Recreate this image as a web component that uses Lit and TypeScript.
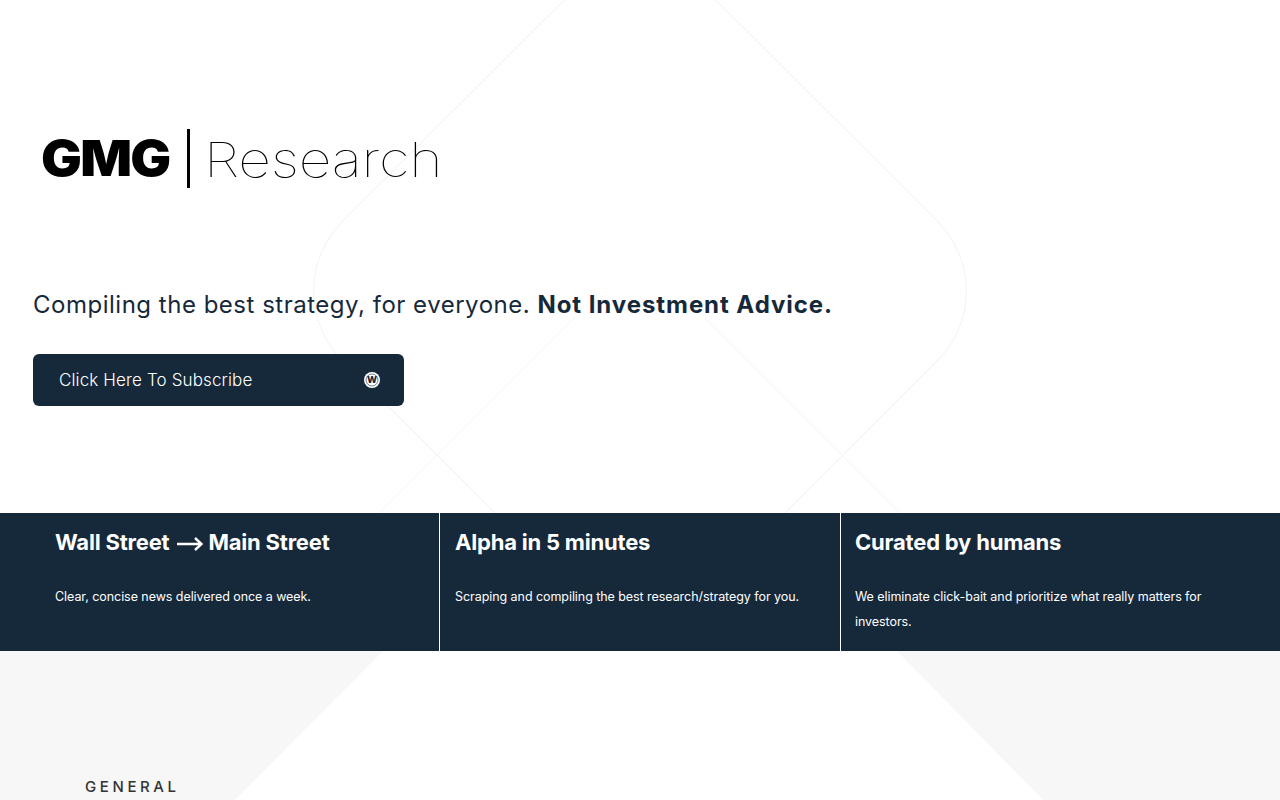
import { LitElement, html, css, svg } from "lit";
import { customElement } from "lit/decorators.js";

const arrow = html`<svg class="arrow" width="26" height="14" viewBox="0 0 26 14" fill="none" stroke="#fff" stroke-width="2.4"><path d="M0 7H24.5M18 1L24.5 7L18 13"></path></svg>`;

const features = [
  { t: html`Wall Street ${arrow} Main Street`, d: "Clear, concise news delivered once a week." },
  { t: html`Alpha in 5 minutes`, d: "Scraping and compiling the best research/strategy for you." },
  { t: html`Curated by humans`, d: "We eliminate click-bait and prioritize what really matters for investors." },
];

@customElement("app-root")
export class AppRoot extends LitElement {
  static styles = css`
    :host { display: block; font-family: Inter, "Liberation Sans", sans-serif; color: #16293b; }
    .page { position: relative; height: 800px; overflow: hidden; background: #fff; }
    .hero { position: relative; height: 513px; box-sizing: border-box; padding: 129px 0 0 33px; }
    .lines { position: absolute; left: 0; top: 0; pointer-events: none; }
    .content { position: relative; }
    .logo { display: flex; align-items: center; height: 59px; padding-left: 8px; color: #000; }
    .gmg { font-weight: 900; font-size: 50px; line-height: 59px; letter-spacing: -1.6px; width: 130px; white-space: nowrap; transform: scaleX(1.085); transform-origin: left center; }
    .bar { width: 3px; height: 59px; background: #000; margin: 0 15px 0 16px; }
    .research { font-weight: 100; font-size: 48px; line-height: 59px; white-space: nowrap; letter-spacing: -0.2px; margin-left: -1px; transform: scaleX(1.19) translateY(1px); transform-origin: left center; }
    .tagline { margin: 102px 0 0; font-size: 24px; line-height: 30px; font-weight: 400; letter-spacing: 0.51px; white-space: nowrap; }
    .tagline b { font-weight: 700; letter-spacing: 0.94px; }
    .btn { margin-top: 34px; width: 371px; height: 52px; box-sizing: border-box; padding: 0 24px 0 26px; background: #16293b; color: #fff; border-radius: 6px; display: flex; align-items: center; justify-content: space-between; font-size: 17px; font-weight: 300; letter-spacing: 0.13px; }
    .btn svg { display: block; }
    .band { position: relative; display: grid; grid-template-columns: 440px 401px 439px; height: 138px; background: #16293b; color: #fff; }
    .col { box-sizing: border-box; padding: 14px 30px 0 15px; border-right: 1px solid #fff; }
    .col:first-child { padding-left: 55px; }
    .col:last-child { border-right: 0; padding-right: 40px; padding-left: 14px; }
    .col h3 { margin: 0; font-size: 22px; line-height: 30px; font-weight: 700; letter-spacing: -0.2px; white-space: nowrap; }
    .arrow { vertical-align: -1px; margin: 0 0 0 3px; }
    .col p { margin: 27px 0 0; font-size: 12.5px; line-height: 25px; font-weight: 400; letter-spacing: -0.06px; }
    .lower { position: relative; height: 149px; background: #f7f7f7; overflow: hidden; }
    .lower svg { position: absolute; left: 0; top: 0; }
    .general { position: absolute; left: 85px; top: 127px; font-size: 15px; line-height: 18px; font-weight: 500; letter-spacing: 3.6px; color: #333; }
  `;

  render() {
    return html`<div class="page">
      <section class="hero">
        <svg class="lines" width="1280" height="513" viewBox="0 0 1280 513" fill="none" stroke="#f3f3f3">
          ${svg`<rect x="380.5" y="31.5" width="519" height="519" rx="98" transform="rotate(45 640 291)"></rect>
          <path d="M575 317L379 513M705 318L900 513"></path>`}
        </svg>
        <div class="content">
          <div class="logo"><span class="gmg">GMG</span><span class="bar"></span><span class="research">Research</span></div>
          <p class="tagline">Compiling the best strategy, for everyone. <b>Not Investment Advice.</b></p>
          <div class="btn">
            <span>Click Here To Subscribe</span>
            <svg width="16" height="16" viewBox="0 0 16 16">
              <circle cx="8" cy="8" r="8" fill="#fff"></circle>
              <circle cx="8" cy="8" r="6" fill="none" stroke="#16293b" stroke-width="0.6"></circle>
              <text x="8" y="11.4" text-anchor="middle" font-size="9.5" font-weight="800" fill="#16293b" font-family="Inter, sans-serif">W</text>
            </svg>
          </div>
        </div>
      </section>
      <section class="band">
        ${features.map((f) => html`<div class="col"><h3>${f.t}</h3><p>${f.d}</p></div>`)}
      </section>
      <section class="lower">
        <svg width="1280" height="149" viewBox="0 0 1280 149"><polygon points="383,0 897,0 1043,149 235,149" fill="#fff"></polygon></svg>
        <div class="general">GENERAL</div>
      </section>
    </div>`;
  }
}
